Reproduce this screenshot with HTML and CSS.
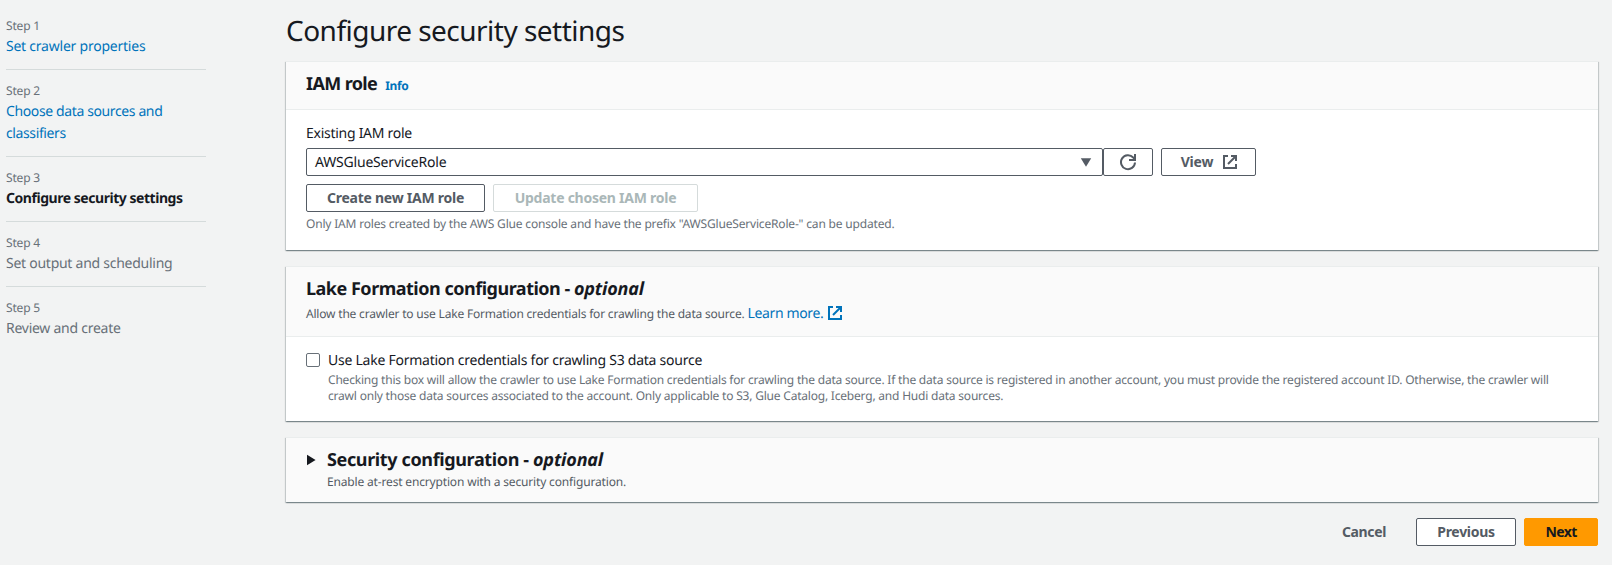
FILE: index.html
```html
<!DOCTYPE html>
<html lang="en">
<head>
<meta charset="utf-8">
<title>Configure security settings</title>
<link rel="stylesheet" href="styles.css">
</head>
<body>
<div class="layout">
  <nav class="steps">
    <div class="step"><span class="step-label">Step 1</span><a class="step-name link">Set crawler properties</a></div>
    <div class="step"><span class="step-label">Step 2</span><a class="step-name link tight">Choose data sources and classifiers</a></div>
    <div class="step"><span class="step-label">Step 3</span><span class="step-name current">Configure security settings</span></div>
    <div class="step"><span class="step-label">Step 4</span><span class="step-name">Set output and scheduling</span></div>
    <div class="step"><span class="step-label">Step 5</span><span class="step-name">Review and create</span></div>
  </nav>
  <main class="content">
    <h1 class="title">Configure security settings</h1>

    <section class="card">
      <header class="card-header role-header">
        <h2 class="heading role-heading">IAM role</h2><a class="info">Info</a>
      </header>
      <div class="card-body role-body">
        <label class="field-label">Existing IAM role</label>
        <div class="role-row">
          <div class="select"><span class="select-value">AWSGlueServiceRole</span>
            <svg class="caret" width="12" height="9" viewBox="0 0 12 9"><path d="M.8 .3h10.4L6 8.8z" fill="#545b64"/></svg>
          </div>
          <button class="button refresh" aria-label="Refresh">
            <svg width="18" height="18" viewBox="0 0 18 18" fill="none" stroke="#545b64" stroke-width="2"><path d="M16 9.5A7 7 0 1 1 14.2 4.5L16 6.3"/><path d="M16 1v6h-6"/></svg>
          </button>
          <button class="button view">View
            <svg width="16" height="16" viewBox="0 0 16 16" fill="none" stroke="#545b64" stroke-width="2"><path d="M6 2H2v12h12v-4"/><path d="M9 2h5v5M14 2L6 10"/></svg>
          </button>
        </div>
        <div class="role-actions">
          <button class="button create">Create new IAM role</button>
          <button class="button update" disabled>Update chosen IAM role</button>
        </div>
        <p class="hint role-hint">Only IAM roles created by the AWS Glue console and have the prefix "AWSGlueServiceRole-" can be updated.</p>
      </div>
    </section>

    <section class="card">
      <header class="card-header lake-header">
        <h2 class="heading lake-heading">Lake Formation configuration - <em class="optional">optional</em></h2>
        <p class="description lake-description">Allow the crawler to use Lake Formation credentials for crawling the data source. <a class="learn">Learn more.</a>
          <svg class="external" width="16" height="16" viewBox="0 0 16 16" fill="none" stroke="#0073bb" stroke-width="2"><path d="M6 2H2v12h12v-4"/><path d="M9 2h5v5M14 2L6 10"/></svg>
        </p>
      </header>
      <div class="card-body lake-body">
        <span class="checkbox"></span>
        <div class="check-text">
          <label class="check-label">Use Lake Formation credentials for crawling S3 data source</label>
          <p class="hint check-hint">Checking this box will allow the crawler to use Lake Formation credentials for crawling the data source. If the data source is registered in another account, you must provide the registered account ID. Otherwise, the crawler will<br>crawl only those data sources associated to the account. Only applicable to S3, Glue Catalog, Iceberg, and Hudi data sources.</p>
        </div>
      </div>
    </section>

    <section class="card security">
      <svg class="expand" width="9" height="12" viewBox="0 0 9 12"><path d="M0 .8v10.4L8.6 6z" fill="#16191f"/></svg>
      <div>
        <h2 class="heading security-heading">Security configuration - <em class="optional">optional</em></h2>
        <p class="description">Enable at-rest encryption with a security configuration.</p>
      </div>
    </section>

    <footer class="footer">
      <button class="button cancel">Cancel</button>
      <button class="button previous">Previous</button>
      <button class="button next">Next</button>
    </footer>
  </main>
</div>
</body>
</html>
```
FILE: styles.css
```css
* { box-sizing: border-box; }
body {
  margin: 0;
  background: #f2f3f3;
  color: #16191f;
  font: 14px/22px "Noto Sans", "Open Sans", sans-serif;
  letter-spacing: -0.25px;
  text-rendering: geometricPrecision;
}
h1, h2, p { margin: 0; }
.layout { display: flex; height: 565px; overflow: hidden; }

/* Wizard navigation */
.steps { width: 200px; margin: 5px 80px 0 6px; flex: none; }
.step { padding: 12px 0 11px; border-bottom: 1px solid #d5dbdb; }
.step:last-child { border-bottom: 0; }
.step-label, .step-name { display: block; color: #687078; }
.step-label { font-size: 12px; line-height: 18px; letter-spacing: -0.17px; margin-bottom: 1px; }
.step-name { letter-spacing: -0.26px; }
.step-name.link { color: #0073bb; letter-spacing: -0.23px; }
.step-name.link.tight { letter-spacing: -0.38px; }
.step-name.current { color: #16191f; font-weight: 700; letter-spacing: -0.46px; }

.content { width: 1312px; padding-top: 13px; }
.title { font-size: 28px; font-weight: 400; line-height: 36px; letter-spacing: -0.52px; margin-bottom: 12px; }

/* Cards */
.card {
  background: #fff;
  border-top: 1px solid #eaeded;
  margin-bottom: 16px;
  box-shadow: 0 1px 1px 0 rgba(0, 28, 36, .3), 1px 1px 1px 0 rgba(0, 28, 36, .15), -1px 1px 1px 0 rgba(0, 28, 36, .15);
}
.card-header { background: #fafafa; border-bottom: 1px solid #eaeded; padding: 11px 20px 0; }
.heading { font-size: 18px; line-height: 22px; font-weight: 700; }
.optional { letter-spacing: -0.18px; }

.role-header { height: 48px; display: flex; align-items: baseline; }
.role-heading { letter-spacing: -0.62px; }
.info { color: #0073bb; font-size: 12px; font-weight: 700; letter-spacing: -0.38px; margin-left: 8px; }
.role-body { height: 140px; padding: 13px 20px 0; }
.field-label { display: block; letter-spacing: -0.27px; margin-bottom: 3px; }
.role-row { display: flex; }
.select {
  width: 797px; height: 28px; border: 1px solid #545b64; border-radius: 2px;
  display: flex; align-items: center; justify-content: space-between;
  padding: 0 10px 0 8px; letter-spacing: -0.19px;
}
.select-value { padding-top: 2px; }
.button {
  font: inherit; font-weight: 700; letter-spacing: -0.25px; color: #545b64; background: #fff;
  border: 1px solid #545b64; border-radius: 2px; height: 28px; padding: 0;
  display: flex; align-items: center; justify-content: center;
}
.refresh { width: 50px; }
.view { width: 95px; margin-left: 8px; padding-left: 2px; gap: 9px; letter-spacing: -0.2px; }
.role-actions { display: flex; gap: 8px; margin-top: 8px; }
.create { width: 179px; }
.update { width: 205px; color: #aab7b8; border-color: #d5dbdb; }
.hint { font-size: 12px; line-height: 16px; color: #687078; letter-spacing: -0.205px; }
.role-hint { margin-top: 4px; letter-spacing: -0.18px; }

.lake-header { height: 70px; }
.lake-heading { letter-spacing: -0.49px; }
.description { font-size: 12px; line-height: 22px; color: #545b64; letter-spacing: -0.164px; }
.lake-description { display: flex; align-items: center; letter-spacing: -0.195px; margin-top: 3px; }
.learn { color: #0073bb; font-size: 14px; letter-spacing: -0.36px; margin-left: 3px; }
.external { margin: 0 0 2px 4px; }
.lake-body { height: 84px; padding: 13px 20px 0; display: flex; }
.checkbox { width: 14px; height: 14px; flex: none; margin: 3px 8px 0 0; border: 1px solid #687078; border-radius: 2px; background: #fff; }
.check-label { display: block; }
.check-hint { white-space: nowrap; }

.security { height: 65px; background: #fafafa; display: flex; padding: 11px 20px 0; margin-bottom: 16px; }
.expand { margin: 5px 11px 0 1px; flex: none; }
.security-heading { letter-spacing: -0.37px; }

.footer { display: flex; justify-content: flex-end; gap: 8px; }
.cancel { width: 88px; border-color: transparent; background: transparent; letter-spacing: -0.37px; }
.previous { width: 100px; letter-spacing: -0.29px; }
.next { width: 74px; background: #ff9900; border-color: #ff9900; color: #16191f; letter-spacing: -0.6px; }
```
